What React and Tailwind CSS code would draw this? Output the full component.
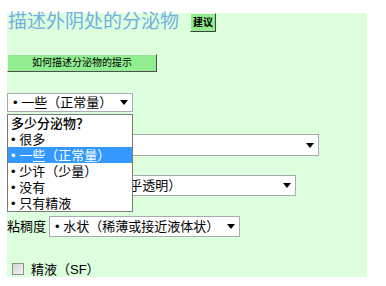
import React from "react";

const F = { fontFamily: '"Liberation Sans", "Noto Sans CJK SC", sans-serif' };

function Arrow() {
  return (
    <svg width="8" height="5" viewBox="0 0 8 5" className="shrink-0">
      <path d="M0 0 L8 0 L4 5 Z" fill="#000" />
    </svg>
  );
}

function Select({ text, w, h, className = "" }) {
  return (
    <div
      className={`flex items-center justify-between bg-white border border-[#a5acb2] pl-[5px] pr-[4px] text-[13px] text-black leading-none ${className}`}
      style={{ width: w, height: h }}
    >
      <span className="whitespace-nowrap">{text}</span>
      <Arrow />
    </div>
  );
}

export default function App() {
  return (
    <div className="w-[386px] h-[286px] bg-white overflow-hidden" style={F}>
      <div className="relative ml-[7px] mt-[13px] w-[360px] h-[264px] bg-[#ddffdd] flex flex-col items-start">
        {/* Title row */}
        <div className="flex items-start h-[22px]">
          <div className="pl-[1px] -mt-[2px] text-[19px] leading-[22px] text-[#74aee3] whitespace-nowrap">
            描述外阴处的分泌物
          </div>
          <div className="ml-[11px] w-[26px] h-[19px] flex items-center justify-center bg-[#90ee90] border border-t-[#e8ffe8] border-l-[#e8ffe8] border-r-[#404040] border-b-[#404040] text-[10px] font-bold text-black leading-none">
            建议
          </div>
        </div>

        {/* Hint button */}
        <div className="mt-[19px] w-[150px] h-[18px] flex items-center justify-center bg-[#90ee90] border border-t-[#e8ffe8] border-l-[#e8ffe8] border-r-[#505050] border-b-[#505050] text-[10px] text-black leading-none">
          如何描述分泌物的提示
        </div>

        {/* Select 1 */}
        <Select className="mt-[21px]" text="• 一些（正常量）" w={126} h={19} />

        {/* Select 2 row */}
        <div className="mt-[22px] flex items-center">
          <span className="w-[53px] text-[13px] text-black">颜色</span>
          <Select text="• 白色" w={259} h={22} />
        </div>

        {/* Select 3 row */}
        <div className="mt-[19px] flex items-center">
          <span className="w-[56px] text-[13px] text-black">性状</span>
          <Select text="• 清澈（几乎透明）" w={233} h={21} />
        </div>

        {/* Select 4 row */}
        <div className="mt-[20px] flex items-center">
          <span className="w-[42px] text-[13px] text-black leading-none">粘稠度</span>
          <Select text="• 水状（稀薄或接近液体状）" w={191} h={21} />
        </div>

        {/* Checkbox row */}
        <div className="mt-[24px] flex items-center h-[16px]">
          <div className="ml-[5px] w-[12px] h-[12px] border border-[#8f8f8f] bg-gradient-to-br from-[#d4d4d4] to-[#f4f4f4]" />
          <span className="ml-[7px] text-[13px] text-black leading-none">精液（SF）</span>
        </div>

        {/* Open dropdown list */}
        <div className="absolute left-0 top-[101px] w-[126px] bg-white border border-[#7a7a7a] flex flex-col text-[13px] text-black leading-none">
          <div className="h-[16px] flex items-center pl-[3px] font-medium">多少分泌物？</div>
          <div className="h-[16px] flex items-center pl-[3px]">• 很多</div>
          <div className="h-[16px] flex items-center pl-[3px] bg-[#3399ff] text-white">• 一些（正常量）</div>
          <div className="h-[16px] flex items-center pl-[3px]">• 少许（少量）</div>
          <div className="h-[16px] flex items-center pl-[3px]">• 没有</div>
          <div className="h-[16px] flex items-center pl-[3px]">• 只有精液</div>
        </div>
      </div>
    </div>
  );
}
